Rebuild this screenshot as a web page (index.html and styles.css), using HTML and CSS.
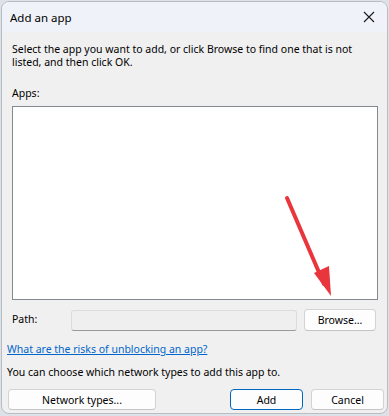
FILE: index.html
```html
<!DOCTYPE html>
<html lang="en">
<head>
    <meta charset="UTF-8">
    <title>Add an app</title>
    <link rel="stylesheet" href="styles.css">
</head>
<body>
    <div class="window">
        <div class="titlebar">
            <span class="title">Add an app</span>
            <svg class="close" width="12" height="12" viewBox="0 0 12 12">
                <path d="M1 1 L11 11 M11 1 L1 11" stroke="#1a1a1a" stroke-width="1.1" fill="none"/>
            </svg>
        </div>

        <div class="content">
            <p class="intro">Select the app you want to add, or click Browse to find one that is not listed, and then click OK.</p>

            <div class="label">Apps:</div>
            <div class="listbox">
                <svg class="arrow" width="60" height="110" viewBox="0 0 60 110">
                    <line x1="8" y1="4" x2="45" y2="90" stroke="#e8363c" stroke-width="4" stroke-linecap="round"/>
                    <polygon points="35,79 50,72 52,102" fill="#e8363c"/>
                </svg>
            </div>

            <div class="path-row">
                <span class="path-label">Path:</span>
                <div class="path-input"></div>
                <button class="btn browse">Browse...</button>
            </div>

            <a class="link" href="#">What are the risks of unblocking an app?</a>

            <p class="note">You can choose which network types to add this app to.</p>

            <div class="actions">
                <button class="btn network">Network types...</button>
                <div class="spacer"></div>
                <button class="btn default">Add</button>
                <button class="btn">Cancel</button>
            </div>
        </div>
    </div>
</body>
</html>
```

FILE: styles.css
```css
body {
    margin: 0;
    padding: 1px 0 0 1px;
    background: #dde1e8;
    font-family: "Noto Sans", "Open Sans", sans-serif;
    font-size: 10.5px;
    color: #000;
}

.window {
    width: 385px;
    height: 411px;
    border: 1px solid #b9bcc2;
    border-radius: 8px;
    background: #f0f0f0;
    overflow: hidden;
}

.titlebar {
    height: 30px;
    background: #eff3f9;
    display: flex;
    align-items: center;
    padding: 0 9px 0 8px;
}

.title {
    flex: 1;
    font-size: 11.5px;
}

.close {
    margin-right: 3px;
}

.content {
    padding: 0 9px 0 10px;
}

.intro {
    margin: 11px 0 0;
    line-height: 13px;
}

.label {
    margin-top: 18px;
    line-height: 13px;
}

.listbox {
    position: relative;
    margin-top: 6px;
    height: 192px;
    background: #fff;
    border: 1px solid #848890;
}

.arrow {
    position: absolute;
    left: 266px;
    top: 87px;
}

.path-row {
    display: flex;
    align-items: center;
    margin-top: 9px;
    height: 22px;
}

.path-label {
    width: 59px;
    margin-top: -3px;
}

.path-input {
    width: 224px;
    height: 19px;
    background: #efefef;
    border: 1px solid #dcdcdc;
    border-bottom-color: #9a9a9a;
    border-radius: 3px;
    margin-right: 7px;
}

.btn {
    font-family: inherit;
    font-size: 10.5px;
    color: #000;
    height: 21px;
    background: #fdfdfd;
    border: 1px solid #d3d3d3;
    border-bottom-color: #c4c4c4;
    border-radius: 4px;
    padding: 0;
    width: 73px;
}

.browse {
    height: 22px;
    width: 72px;
}

.link {
    display: block;
    margin: 12px 0 0 -5px;
    line-height: 13px;
    color: #0066cc;
    text-decoration: underline;
}

.note {
    margin: 10px 0 0 -5px;
    line-height: 13px;
}

.actions {
    display: flex;
    gap: 8px;
    margin: 10px -6px 0 -4px;
}

.spacer {
    flex: 1;
}

.network {
    width: 148px;
}

.default {
    border-color: #0067c0;
}
```
